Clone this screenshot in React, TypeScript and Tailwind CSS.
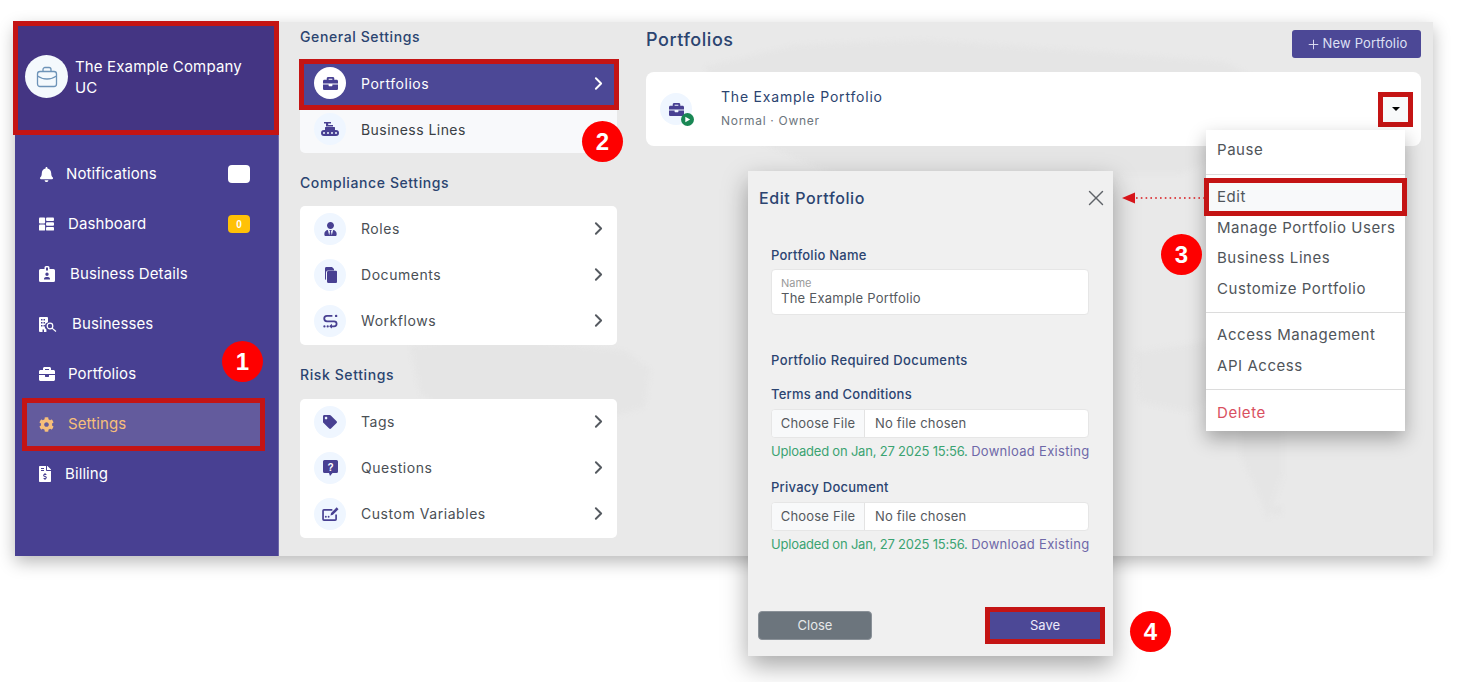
import React from 'react';
import { ChevronRight, Plus, X } from 'lucide-react';
import {
  FaBell,
  FaBriefcase,
  FaCog,
  FaFileInvoiceDollar,
  FaTag,
  FaUserTie,
} from 'react-icons/fa';

const OutlineCase = ({ className }: { className?: string }) => (
  <svg viewBox="0 0 24 24" className={className} fill="none" stroke="currentColor" strokeWidth="1.3">
    <rect x="2.5" y="6.5" width="19" height="15" rx="2.5" />
    <path d="M8 6.5V4.5a2 2 0 0 1 2-2h4a2 2 0 0 1 2 2v2" />
    <path d="M2.5 11c3 2.2 6 3 9.5 3s6.5-.8 9.5-3" />
  </svg>
);

const DashboardIcon = ({ className }: { className?: string }) => (
  <svg viewBox="0 0 16 14" className={className} fill="currentColor">
    <rect x="0" y="0" width="6.5" height="6.5" rx="1" />
    <rect x="0" y="7.5" width="6.5" height="6.5" rx="1" />
    <rect x="7.5" y="0" width="8.5" height="3.8" rx="1" />
    <rect x="7.5" y="5.1" width="8.5" height="3.8" rx="1" />
    <rect x="7.5" y="10.2" width="8.5" height="3.8" rx="1" />
  </svg>
);

const DetailsIcon = ({ className }: { className?: string }) => (
  <svg viewBox="0 0 16 16" className={className}>
    <path fill="currentColor" fillRule="evenodd" d="M1.5 3H5.5V1.5A1.5 1.5 0 0 1 7 0h2a1.5 1.5 0 0 1 1.5 1.5V3h4A1.5 1.5 0 0 1 16 4.5v10a1.5 1.5 0 0 1-1.5 1.5h-13A1.5 1.5 0 0 1 0 14.5v-10A1.5 1.5 0 0 1 1.5 3zM7 1.5V4.5h2v-3zM8 6.5a1.7 1.7 0 1 0 0 3.4 1.7 1.7 0 0 0 0-3.4zM5 13.5h6V12.5a2 2 0 0 0-2-1.6H7a2 2 0 0 0-2 1.6z" />
  </svg>
);

const BusinessesIcon = ({ className }: { className?: string }) => (
  <svg viewBox="0 0 18 15" className={className}>
    <path fill="currentColor" fillRule="evenodd" d="M0 1a1 1 0 0 1 1-1h7a1 1 0 0 1 1 1v4.2a4.2 4.2 0 0 0-1.6 7.4V15H5v-2.5H3.5V15H1a1 1 0 0 1-1-1zM2 2v1.6h1.5V2zm2.5 0v1.6H6V2zM2 5v1.6h1.5V5zm2.5 0v1.6H6V5zM2 8v1.6h1.5V8zm2.5 0v1.6H6V8z" />
    <circle cx="11" cy="9" r="2.8" fill="none" stroke="currentColor" strokeWidth="1.2" />
    <path d="M13 11.1 17 14.5" stroke="currentColor" strokeWidth="1.2" />
  </svg>
);

const ConveyorIcon = ({ className }: { className?: string }) => (
  <svg viewBox="0 0 18 14" className={className} fill="currentColor">
    <path d="M3 0h7v1.6H7.2V3H12v1.4H5V1.6H3z" />
    <rect x="4" y="5" width="10" height="3" rx="0.5" />
    <path fillRule="evenodd" d="M3 8h12a3 3 0 0 1 0 6H3a3 3 0 0 1 0-6zm0 2a1 1 0 1 0 0 2 1 1 0 0 0 0-2zm4 0a1 1 0 1 0 0 2 1 1 0 0 0 0-2zm4 0a1 1 0 1 0 0 2 1 1 0 0 0 0-2zm4 0a1 1 0 1 0 0 2 1 1 0 0 0 0-2z" />
  </svg>
);

const DocumentsIcon = ({ className }: { className?: string }) => (
  <svg viewBox="0 0 14 16" className={className} fill="currentColor">
    <path d="M3 0h6l2 2v1.5H5a2 2 0 0 0-2 2V13a1.5 1.5 0 0 1-1-1.4V1.5A1.5 1.5 0 0 1 3 0z" />
    <path d="M5.5 3.8H13a1 1 0 0 1 1 1V15a1 1 0 0 1-1 1H5.5a1.5 1.5 0 0 1-1.5-1.5V5.3a1.5 1.5 0 0 1 1.5-1.5z" />
  </svg>
);

const WorkflowIcon = ({ className }: { className?: string }) => (
  <svg viewBox="0 0 16 16" className={className} fill="none" stroke="currentColor" strokeWidth="1.9">
    <path d="M10 2H4.2a2.8 2.8 0 0 0 0 5.8h7.6a2.7 2.7 0 0 1 0 5.4H8" />
    <circle cx="14" cy="2" r="1.3" fill="currentColor" stroke="none" />
    <path d="M9.5 10.5v5l-3-2.5z" fill="currentColor" stroke="none" />
    <circle cx="1.5" cy="13.2" r="1.2" fill="currentColor" stroke="none" />
    <circle cx="5" cy="13.2" r="1.2" fill="currentColor" stroke="none" />
  </svg>
);

const QuestionIcon = ({ className }: { className?: string }) => (
  <svg viewBox="0 0 15 16" className={className}>
    <path d="M1.5 0h12A1.5 1.5 0 0 1 15 1.5v10a1.5 1.5 0 0 1-1.5 1.5H9.5L7 16l-1-3H1.5A1.5 1.5 0 0 1 0 11.5v-10A1.5 1.5 0 0 1 1.5 0z" fill="currentColor" />
    <text x="7.5" y="10.5" textAnchor="middle" fontSize="10" fontWeight="700" fill="white" fontFamily="Liberation Sans, sans-serif">?</text>
  </svg>
);

const VariablesIcon = ({ className }: { className?: string }) => (
  <svg viewBox="0 0 18 15" className={className}>
    <path d="M11 3H2a1 1 0 0 0-1 1v9a1 1 0 0 0 1 1h12a1 1 0 0 0 1-1V8" fill="none" stroke="currentColor" strokeWidth="1.8" />
    <path d="M9 9l.6-2.6L15.6.4l2 2-6 6z" fill="currentColor" />
    <circle cx="4" cy="10.5" r="1" fill="currentColor" />
    <circle cx="7" cy="10.5" r="1" fill="currentColor" />
  </svg>
);

const navItems = [
  { label: 'Notifications', icon: <FaBell className="w-[15px] h-[15px]" />, textClass: 'ml-[9px]', badge: 'bg-white' },
  { label: 'Dashboard', icon: <DashboardIcon className="w-[15px] h-[14px]" />, textClass: 'ml-[11px]', badge: 'bg-[#ffc107]' },
  { label: 'Business Details', icon: <DetailsIcon className="w-[16px] h-[16px]" />, textClass: 'ml-[13px]' },
  { label: 'Businesses', icon: <BusinessesIcon className="w-[18px] h-[15px]" />, textClass: 'ml-[15px]' },
  { label: 'Portfolios', icon: <FaBriefcase className="w-[16px] h-[16px]" />, textClass: 'ml-[11px]' },
  { label: 'Settings', icon: <FaCog className="w-[15px] h-[15px]" />, textClass: 'ml-[11px]', active: true },
  { label: 'Billing', icon: <FaFileInvoiceDollar className="w-[12px] h-[16px]" />, textClass: 'ml-[8px]' },
];

const settingsGroups = [
  {
    title: 'Compliance Settings',
    rows: [
      { label: 'Roles', icon: <FaUserTie className="w-[13px] h-[14px]" /> },
      { label: 'Documents', icon: <DocumentsIcon className="w-[14px] h-[16px]" /> },
      { label: 'Workflows', icon: <WorkflowIcon className="w-[15px] h-[15px]" /> },
    ],
  },
  {
    title: 'Risk Settings',
    rows: [
      { label: 'Tags', icon: <FaTag className="w-[14px] h-[14px]" /> },
      { label: 'Questions', icon: <QuestionIcon className="w-[15px] h-[16px]" /> },
      { label: 'Custom Variables', icon: <VariablesIcon className="w-[17px] h-[14px]" /> },
    ],
  },
];

const Marker = ({ n, className }: { n: number; className: string }) => (
  <div className={`absolute z-30 w-[41px] h-[41px] rounded-full bg-[#fe0000] text-white flex items-center justify-center text-[24px] font-bold [font-family:'Liberation_Sans',sans-serif] ${className}`}>
    {n}
  </div>
);

const SettingRow = ({ label, icon }: { label: string; icon: React.ReactNode }) => (
  <div className="h-[46px] flex items-center pl-[14px] pr-[8px]">
    <span className="w-[32px] h-[32px] rounded-full bg-[#eff6ff] text-[#484092] flex items-center justify-center">{icon}</span>
    <span className="ml-[15px] pb-[2px] flex-1 text-[14px] tracking-[0.55px] text-[#4a4f55]">{label}</span>
    <ChevronRight className="w-[21px] h-[21px] mb-[2px] text-[#555a60]" strokeWidth={2.2} />
  </div>
);

const MenuItem = ({ label, className = 'text-[#50555a]' }: { label: string; className?: string }) => (
  <div className={`h-[30.5px] flex items-center pl-[11px] whitespace-nowrap text-[15px] tracking-[0.55px] ${className}`}>{label}</div>
);

const FileField = ({ title, className }: { title: string; className: string }) => (
  <div className={className}>
    <div className="h-[18px] leading-[18px] text-[13px] font-medium tracking-[0.25px] text-[#2b4470]">{title}</div>
    <div className="mt-[6px] h-[29px] flex bg-white border border-[#e6e6e6] rounded-[4px] text-[13px] tracking-[0.2px] text-[#55595e] overflow-hidden">
      <div className="w-[93px] bg-[#f8f9fa] border-r border-[#e3e3e3] flex items-center justify-center">Choose File</div>
      <div className="flex items-center pl-[10px]">No file chosen</div>
    </div>
    <div className="mt-[4px] h-[18px] leading-[18px] text-[13px] whitespace-nowrap text-[#3ba372] tracking-[-0.2px]">
      Uploaded on Jan, 27 2025 15:56. <span className="text-[#6e68a8] tracking-[0.3px]">Download Existing</span>
    </div>
  </div>
);

export default function App() {
  return (
    <div className="relative w-[1466px] h-[682px] overflow-hidden bg-white [font-family:Inter,sans-serif]">
      <div className="absolute left-[15px] top-[22px] w-[1418px] h-[534px] flex bg-[#e9e9e9] shadow-[0_6px_16px_rgba(0,0,0,0.28)]">
        {/* world map behind the content */}
        <svg viewBox="0 0 1418 534" className="absolute inset-0 w-full h-full blur-[2px]" fill="#e5e5e5">
          <path d="M395 325l60-12 70 6 85 10 25 18-5 38-40 12-55 4-40 10-50-10-40-30z" />
          <path d="M690 45l90-22 130-5 150 10 150 12 60 32-35 50-70 30-60 0-30 70-50-12-70-35-130-20-105-45z" />
          <path d="M1225 408h43v45l-15 45-12-30-16-35z" />
          <circle cx="1262" cy="488" r="5" />
          <path d="M1120 330l70-10 30 40-45 30-50-10z" />
        </svg>

        {/* sidebar */}
        <aside className="relative w-[264px] shrink-0 bg-[#484092] border-r border-[#6c67a8] text-white">
          <div className="relative h-[113px] bg-[#443583] flex items-center pl-[10px] pb-[4px]">
            <span className="w-[43px] h-[43px] rounded-full bg-[#f4f9fd] flex items-center justify-center">
              <OutlineCase className="w-[24px] h-[24px] text-[#6d93b8]" />
            </span>
            <span className="ml-[7px] text-[15px] leading-[21px] tracking-[0.15px]">
              The Example Company
              <br />
              UC
            </span>
            <span className="absolute -left-[2px] -right-[1px] -top-[1px] bottom-0 border-[5px] border-[#c41414]" />
          </div>
          <nav className="pt-[13px]">
            {navItems.map((item) => (
              <div key={item.label} className="relative h-[50px] flex items-center pt-[2px] pl-[24px] pr-[28px]">
                {item.active && (
                  <span className="absolute left-[7px] right-[13px] top-0 -bottom-[3px] bg-[#635b9d] border-[5px] border-[#c41414]" />
                )}
                <span className={`relative w-[18px] shrink-0 flex ${item.active ? 'text-[#f7bf7a]' : ''}`}>{item.icon}</span>
                <span className={`relative flex-1 text-[15px] tracking-[0.1px] ${item.textClass} ${item.active ? 'text-[#f7bf7a]' : ''}`}>
                  {item.label}
                </span>
                {item.badge && (
                  <span className={`w-[22px] h-[18px] rounded-[4px] flex items-center justify-center text-white text-[10px] font-bold [font-family:'Liberation_Sans',sans-serif] ${item.badge}`}>
                    0
                  </span>
                )}
              </div>
            ))}
          </nav>
        </aside>

        {/* settings column */}
        <section className="relative ml-[21px] w-[317px] shrink-0 pt-[5px]">
          <h3 className="h-[20px] leading-[20px] text-[14px] font-medium tracking-[0.6px] text-[#2b4470]">General Settings</h3>
          <div className="mt-[13px] h-[93px] rounded-[5px] bg-[#f8f9fb]">
            <div className="relative h-[46px] flex items-center pl-[14px] pr-[8px]">
              <span className="absolute -left-[1px] -right-[2px] -top-[1px] -bottom-[4px] bg-[#4c4896] border-[5px] border-[#c41414]" />
              <span className="relative w-[32px] h-[32px] rounded-full bg-white text-[#484092] flex items-center justify-center">
                <FaBriefcase className="w-[15px] h-[15px]" />
              </span>
              <span className="relative ml-[15px] flex-1 text-[14px] tracking-[0.55px] text-white">Portfolios</span>
              <ChevronRight className="relative w-[21px] h-[21px] text-white" strokeWidth={2.2} />
            </div>
            <div className="h-[46.5px] flex items-center pl-[14px]">
              <span className="w-[32px] h-[32px] rounded-full bg-[#eff6ff] text-[#484092] flex items-center justify-center">
                <ConveyorIcon className="w-[18px] h-[14px]" />
              </span>
              <span className="ml-[15px] text-[14px] tracking-[0.45px] text-[#3a3f45]">Business Lines</span>
            </div>
          </div>
          {settingsGroups.map((group, i) => (
            <div key={group.title}>
              <h3 className="mt-[20px] h-[20px] leading-[20px] text-[14px] font-medium tracking-[0.6px] text-[#2b4470]">{group.title}</h3>
              <div className={`${i === 0 ? 'mt-[13px]' : 'mt-[14px]'} rounded-[5px] bg-white pb-[1px]`}>
                {group.rows.map((row) => (
                  <SettingRow key={row.label} label={row.label} icon={row.icon} />
                ))}
              </div>
            </div>
          ))}
        </section>

        {/* portfolios */}
        <main className="relative ml-[29px] w-[775px] shrink-0 pt-[8px]">
          <div className="h-[28px] flex items-start justify-between">
            <h2 className="text-[18px] leading-[20px] font-medium tracking-[0.55px] text-[#2b4470]">Portfolios</h2>
            <button className="w-[129px] h-[28px] rounded-[3px] bg-[#4c4896] text-[#dfe0f5] text-[13px] tracking-[0.15px] flex items-center justify-center">
              <Plus className="w-[15px] h-[15px] mr-[2px]" strokeWidth={1.5} />
              New Portfolio
            </button>
          </div>
          <div className="mt-[14px] h-[74px] rounded-[8px] bg-white flex items-center pl-[14px] pr-[13px]">
            <span className="relative w-[32px] h-[32px] rounded-full bg-[#eff6ff] text-[#484092] flex items-center justify-center">
              <FaBriefcase className="w-[15px] h-[15px]" />
              <span className="absolute -right-[2px] -bottom-[1px] w-[13px] h-[13px] rounded-full bg-[#198754] flex items-center justify-center">
                <svg viewBox="0 0 8 8" className="w-[7px] h-[7px]" fill="white"><path d="M1.5 0.8 7 4 1.5 7.2z" /></svg>
              </span>
            </span>
            <div className="ml-[29px] flex-1 pb-[3px]">
              <div className="text-[14px] tracking-[0.8px] text-[#2b4470]">The Example Portfolio</div>
              <div className="mt-[5px] text-[12px] tracking-[0.7px] text-[#6c757d]">Normal · Owner</div>
            </div>
            <div className="w-[25px] h-[25px] bg-[#f8f9fa] flex items-center justify-center outline-[5px] outline-[#c41414]">
              <span className="w-0 h-0 border-x-[4px] border-x-transparent border-t-[4px] border-t-black" />
            </div>
          </div>
        </main>
      </div>

      {/* open portfolio menu */}
      <div className="absolute z-20 left-[1206px] top-[130px] w-[199px] h-[301px] bg-white pt-[5px] shadow-[0_8px_18px_rgba(0,0,0,0.3)]">
        <MenuItem label="Pause" />
        <div className="mt-[8px] mb-[7.5px] h-px bg-[#dcdcdc]" />
        <div className="relative">
          <span className="absolute -left-[2px] -right-[2px] -top-[4px] -bottom-[3px] bg-[#f8f9fa] border-[5px] border-[#c41414]" />
          <div className="relative"><MenuItem label="Edit" /></div>
        </div>
        <MenuItem label="Manage Portfolio Users" />
        <MenuItem label="Business Lines" />
        <MenuItem label="Customize Portfolio" />
        <div className="mt-[7.5px] mb-[7.5px] h-px bg-[#dcdcdc]" />
        <MenuItem label="Access Management" />
        <MenuItem label="API Access" />
        <div className="mt-[8px] mb-[8px] h-px bg-[#dcdcdc]" />
        <MenuItem label="Delete" className="text-[#d9505f]" />
      </div>

      {/* dotted pointer from the menu to the dialog */}
      <svg viewBox="0 0 82 12" className="absolute z-20 left-[1122px] top-[192px] w-[82px] h-[12px]">
        <path d="M0 6 13 0.5v11z" fill="#d7141a" />
        <path d="M14 6H82" stroke="#d7141a" strokeWidth="1.6" strokeDasharray="1.6 3.2" />
      </svg>

      {/* edit dialog */}
      <div className="absolute z-10 left-[748px] top-[171px] w-[365px] h-[485px] bg-[#f0f0f0] flex flex-col shadow-[0_10px_24px_rgba(0,0,0,0.35)]">
        <div className="h-[54px] flex items-center justify-between pl-[11px] pr-[4px]">
          <h2 className="text-[16px] font-medium tracking-[0.6px] text-[#2b4470]">Edit Portfolio</h2>
          <X className="w-[26px] h-[26px] text-[#5f6368]" strokeWidth={1.3} />
        </div>
        <div className="pl-[23px] pr-[24px] pt-[21px]">
          <div className="h-[18px] leading-[18px] text-[13px] font-medium tracking-[0.25px] text-[#2b4470]">Portfolio Name</div>
          <div className="mt-[5px] h-[46px] bg-white border border-[#e6e6e6] rounded-[4px] px-[9px] pt-[7px]">
            <div className="text-[11px] leading-[13px] text-[#9a9a9a]">Name</div>
            <div className="text-[13px] leading-[16px] tracking-[0.25px] text-[#55595e]">The Example Portfolio</div>
          </div>
          <div className="mt-[36px] h-[18px] leading-[18px] text-[13px] font-medium tracking-[0.4px] text-[#2b4470]">Portfolio Required Documents</div>
          <FileField title="Terms and Conditions" className="mt-[16px]" />
          <FileField title="Privacy Document" className="mt-[18px]" />
        </div>
        <div className="mt-auto flex items-center justify-between pl-[10px] pr-[13px] pb-[16px]">
          <button className="w-[114px] h-[29px] rounded-[4px] bg-[#6c757d] border border-[#8a9198] text-[#e6e8ea] text-[13px]">Close</button>
          <button className="w-[110px] h-[27px] bg-[#4c4896] text-[#eceafa] text-[13px] outline-[5px] outline-[#c41414]">Save</button>
        </div>
      </div>

      <Marker n={1} className="left-[222px] top-[341px]" />
      <Marker n={2} className="left-[582px] top-[121px]" />
      <Marker n={3} className="left-[1161px] top-[234px]" />
      <Marker n={4} className="left-[1130px] top-[611px]" />
    </div>
  );
}
